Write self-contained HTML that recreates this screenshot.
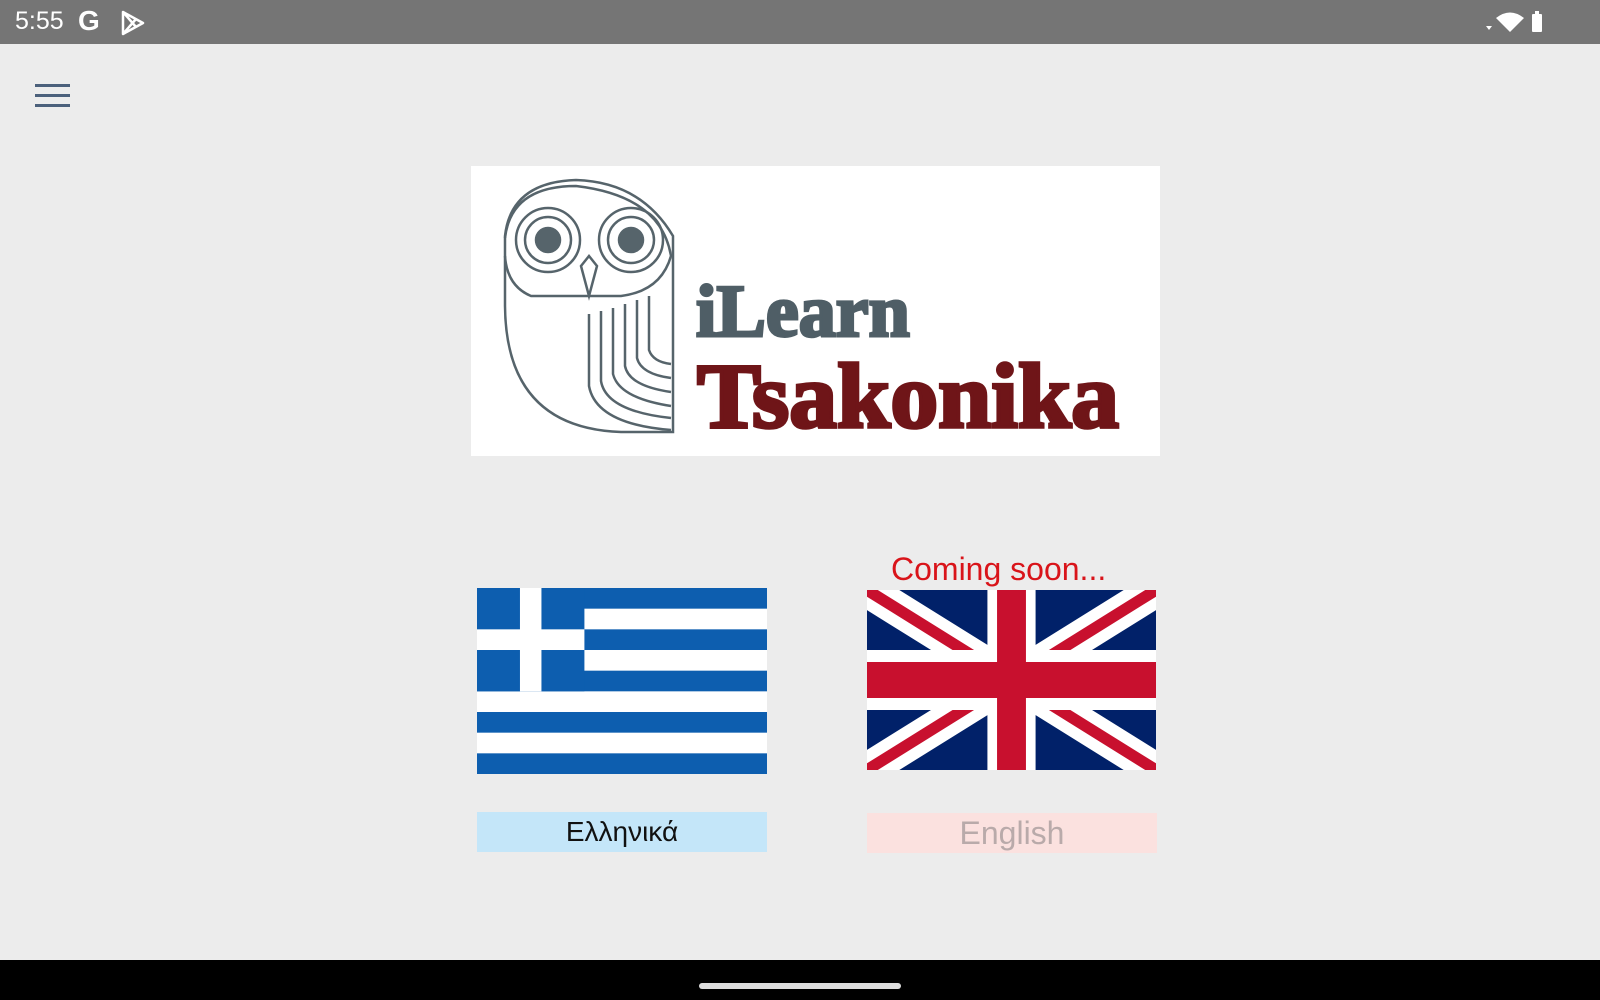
<!DOCTYPE html>
<html><head><meta charset="utf-8"><style>
body{margin:0;width:1600px;height:1000px;background:#ececec;position:relative;overflow:hidden;font-family:"Liberation Sans",sans-serif}
.sb{position:absolute;left:0;top:0;width:1600px;height:44px;background:#757575;color:#fff}
.nav{position:absolute;left:0;top:960px;width:1600px;height:40px;background:#000}
.pill{position:absolute;left:699px;top:983px;width:202px;height:6px;border-radius:3px;background:#ddd}
.logo{position:absolute;left:471px;top:166px;width:689px;height:290px;background:#fff}
.t{position:absolute;white-space:nowrap;font-family:"Liberation Serif",serif;font-weight:bold;transform-origin:0 0}
.lbl{position:absolute;height:40px;text-align:center;line-height:40px;font-size:28px}
</style></head><body>
<div class="sb">
<div style="position:absolute;left:15px;top:7px;font-size:25px">5:55</div>
<div style="position:absolute;left:78px;top:5px;font-size:28px;font-weight:bold">G</div>
<svg style="position:absolute;left:120px;top:10px" width="26" height="26" viewBox="0 0 26 26"><path d="M3 2 L23 13 L3 24 Z M3 2 L16 17 M3 24 L16 9" fill="none" stroke="#fff" stroke-width="2.5" stroke-linejoin="round"/></svg>
<svg style="position:absolute;left:1484px;top:10px" width="60" height="24" viewBox="0 0 60 24"><path d="M2 16 L8 16 L5 20Z" fill="#fff"/><path d="M12 8 Q26 -3 40 8 L26 22 Z" fill="#fff"/><rect x="48" y="4" width="10" height="18" rx="1" fill="#fff"/><rect x="51" y="1" width="4" height="3" fill="#fff"/></svg>
</div>
<svg style="position:absolute;left:35px;top:84px" width="35" height="26"><rect y="0" width="35" height="3" fill="#4b607b"/><rect y="10" width="35" height="3" fill="#4b607b"/><rect y="20" width="35" height="3" fill="#4b607b"/></svg>
<div class="logo"></div>
<svg style="position:absolute;left:471px;top:166px" width="689" height="290" viewBox="0 0 689 290" fill="none" stroke="#56646b" stroke-width="2.5">
<path d="M202 266 L150 266 Q35 262 34 140 L34 70 Q40 16 105 14 Q170 16 202 70 Z"/>
<path d="M34 72 Q40 20 105 20 Q190 30 200 90 Q190 125 150 130 L60 130 Q36 120 34 90"/>
<circle cx="77" cy="74" r="32"/><circle cx="77" cy="74" r="23"/><circle cx="77" cy="74" r="12" fill="#56646b"/>
<circle cx="160" cy="74" r="32"/><circle cx="160" cy="74" r="23"/><circle cx="160" cy="74" r="12" fill="#56646b"/>
<path d="M110 100 L118 130 L126 100 L118 90 Z"/>
<path d="M118 148 L118 220 Q125 258 200 264"/>
<path d="M130 145 L130 215 Q135 245 200 252"/>
<path d="M142 142 L142 208 Q148 232 200 240"/>
<path d="M154 138 L154 200 Q158 220 200 226"/>
<path d="M166 134 L166 192 Q170 208 200 212"/>
<path d="M178 130 L178 184 Q182 196 200 198"/>
</svg>
<div class="t" style="left:696px;top:270px;font-size:74px;color:#4f5e66;transform:scaleX(1.0);-webkit-text-stroke:3px #4f5e66">iLearn</div>
<div class="t" style="left:697px;top:343px;font-size:92px;color:#6f1518;transform:scaleX(1.04);-webkit-text-stroke:3.5px #6f1518">Tsakonika</div>
<svg style="position:absolute;left:477px;top:588px" width="290" height="186" viewBox="0 0 27 18" preserveAspectRatio="none">
<rect width="27" height="18" fill="#0d5eaf"/>
<g fill="#fff"><rect y="2" width="27" height="2"/><rect y="6" width="27" height="2"/><rect y="10" width="27" height="2"/><rect y="14" width="27" height="2"/></g>
<rect width="10" height="10" fill="#0d5eaf"/><rect x="4" width="2" height="10" fill="#fff"/><rect y="4" width="10" height="2" fill="#fff"/>
</svg>
<svg style="position:absolute;left:867px;top:590px" width="289" height="180" viewBox="0 0 60 30" preserveAspectRatio="none">
<rect width="60" height="30" fill="#012169"/>
<path d="M0 0L60 30M60 0L0 30" stroke="#fff" stroke-width="6"/>
<path d="M0 0L60 30M60 0L0 30" stroke="#c8102e" stroke-width="2"/>
<path d="M30 0V30M0 15H60" stroke="#fff" stroke-width="10"/>
<path d="M30 0V30M0 15H60" stroke="#c8102e" stroke-width="6"/>
</svg>
<div style="position:absolute;left:891px;top:551px;font-size:32px;color:#d9141a">Coming soon...</div>
<div class="lbl" style="left:477px;top:812px;width:290px;background:#c4e6f9;color:#111">Ελληνικά</div>
<div class="lbl" style="left:867px;top:813px;width:290px;background:#fbe1df;color:#b9aaaa;font-size:32px">English</div>
<div class="nav"></div><div class="pill"></div>
</body></html>
